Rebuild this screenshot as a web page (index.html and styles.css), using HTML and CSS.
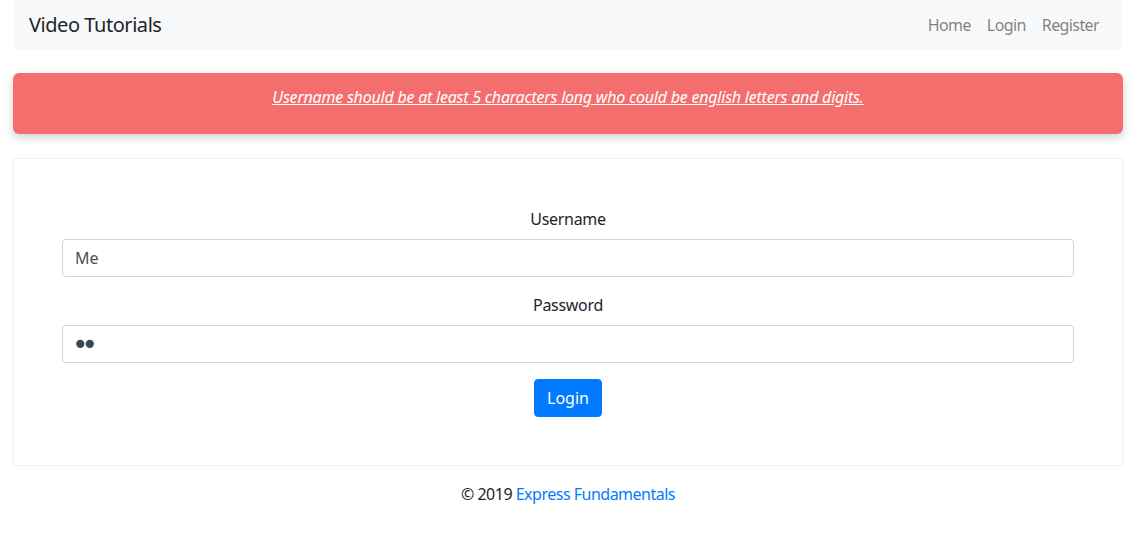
FILE: index.html
```html
<!DOCTYPE html>
<html lang="en">
<head>
<meta charset="utf-8">
<title>Video Tutorials</title>
<link rel="stylesheet" href="styles.css">
</head>
<body>
<div class="container">
  <nav class="navbar">
    <a class="brand" href="#">Video Tutorials</a>
    <ul class="nav">
      <li><a href="#">Home</a></li>
      <li><a href="#">Login</a></li>
      <li><a href="#">Register</a></li>
    </ul>
  </nav>
  <div class="alert">
    <a href="#" class="alert-text">Username should be at least 5 characters long who could be english letters and digits.</a>
  </div>
  <div class="card">
    <form class="form">
      <div class="form-group">
        <label for="username">Username</label>
        <input id="username" type="text" value="Me">
      </div>
      <div class="form-group">
        <label for="password">Password</label>
        <input id="password" class="input-password" type="password" value="12">
      </div>
      <button type="button" class="btn">Login</button>
    </form>
  </div>
  <footer class="footer">© 2019 <a href="#">Express Fundamentals</a></footer>
</div>
</body>
</html>
```
FILE: styles.css
```css
* { box-sizing: border-box; }
body {
  margin: 0;
  font-family: "Noto Sans", "Open Sans", sans-serif;
  font-size: 16px;
  line-height: 1.5;
  color: #212529;
  background: #fff;
  letter-spacing: -0.3px;
}
.container {
  padding: 0 17px 0 13px;
}
.navbar {
  height: 50px;
  background: #f8f9fa;
  display: flex;
  align-items: center;
  justify-content: space-between;
  padding: 0 16px;
}
.brand {
  font-size: 20px;
  color: #212529;
  text-decoration: none;
  line-height: 30px;
  letter-spacing: -0.45px;
}
.nav {
  list-style: none;
  display: flex;
  margin: 0;
  padding: 0;
}
.nav a {
  display: block;
  padding: 0 8px;
  color: rgba(0,0,0,.5);
  text-decoration: none;
  letter-spacing: -0.6px;
}
.alert {
  margin-top: 23px;
  background: #f56e6e;
  border-radius: 6px;
  box-shadow: 0 4px 10px rgba(0,0,0,.18);
  padding: 12px 20px 25px;
  text-align: center;
  height: 61px;
}
.alert-text {
  color: #fff;
  font-style: italic;
  text-decoration: underline;
  letter-spacing: -0.22px;
}
.card {
  margin-top: 24px;
  border: 1px solid #f2f2f2;
  padding: 48px;
}
.form {
  display: flex;
  flex-direction: column;
  align-items: center;
}
.form-group {
  width: 100%;
  display: flex;
  flex-direction: column;
  align-items: center;
  margin-bottom: 16px;
}
.form-group label {
  margin-bottom: 8px;
}
.form-group input {
  width: 100%;
  height: 38px;
  padding: 6px 12px;
  font: inherit;
  letter-spacing: 0;
  color: #495057;
  border: 1px solid #ced4da;
  border-radius: 4px;
  background: #fff;
}
.form-group .input-password {
  font-family: "DejaVu Sans", sans-serif;
  font-size: 28px;
  line-height: 1;
  letter-spacing: -7px;
  padding: 0 0 0 9px;
  color: #3f4650;
}
.btn {
  font: inherit;
  color: #fff;
  background: #007bff;
  border: 1px solid #007bff;
  border-radius: 4px;
  height: 38px;
  padding: 0 12px;
}
.footer {
  text-align: center;
  margin-top: 16px;
  letter-spacing: -0.5px;
}
.footer a {
  color: #007bff;
  text-decoration: none;
}
```
